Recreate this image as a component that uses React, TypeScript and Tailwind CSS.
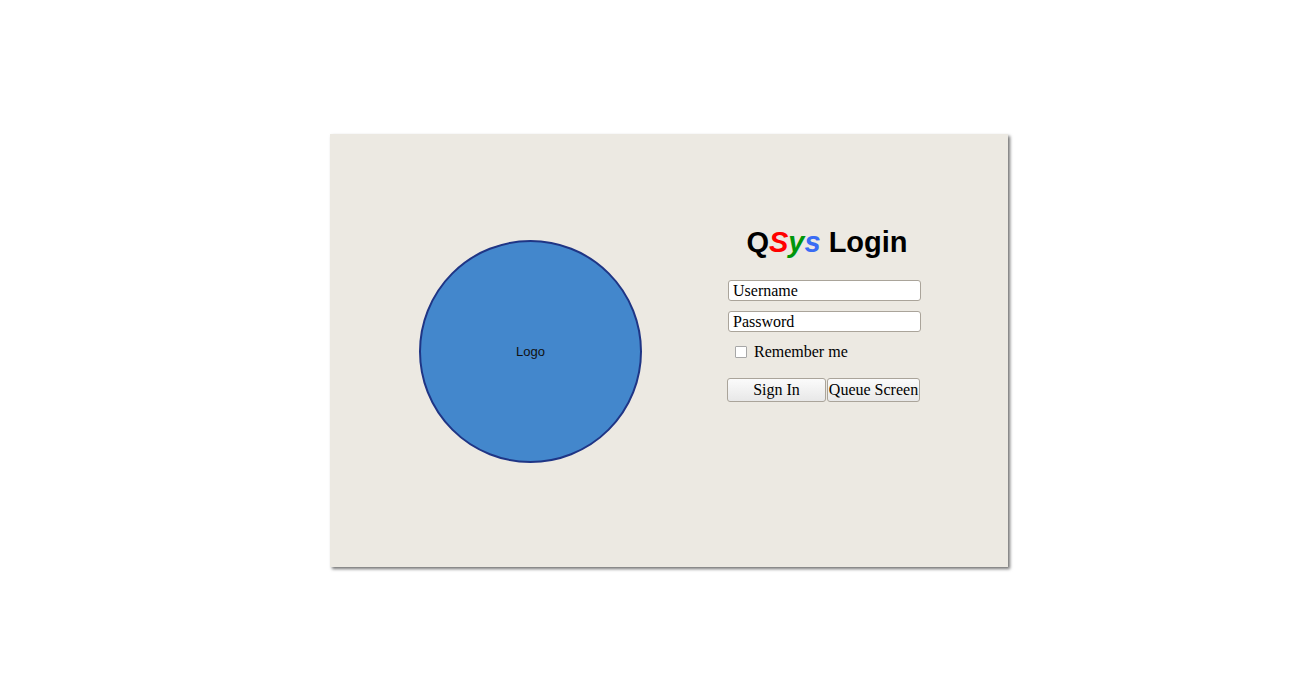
export default function App() {
  return (
    <div className="min-h-screen bg-white pt-[134px] pl-[330px] font-['Liberation_Serif',serif]">
      {/* login panel */}
      <div className="w-[678px] h-[433px] bg-[#ece9e2] shadow-[2px_2px_3px_rgba(0,0,0,0.55)] flex items-start">
        {/* logo placeholder */}
        <div className="ml-[89px] mt-[106px] w-[223px] h-[223px] rounded-full bg-[#4387cc] border-2 border-[#1f3585] flex items-center justify-center">
          <span className="font-['Liberation_Sans',Arial,sans-serif] text-[13px] text-[#111]">Logo</span>
        </div>

        {/* form */}
        <div className="ml-[85px] mt-[92px] w-[194px] flex flex-col">
          <h1 className="pl-[6px] text-center font-['Liberation_Sans',Arial,sans-serif] font-bold text-[29px] leading-[32px] text-black whitespace-nowrap">
            Q<i className="text-[#ff0000]">S</i>
            <i className="text-[#00960a]">y</i>
            <i className="text-[#3a6cf4]">s</i> Login
          </h1>

          <input
            className="mt-[22px] ml-px w-[193px] h-[21px] px-[4px] bg-white border border-[#aaa49a] rounded-[3px] text-[16px] text-black outline-none"
            defaultValue="Username"
          />
          <input
            className="mt-[10px] ml-px w-[193px] h-[21px] px-[4px] bg-white border border-[#aaa49a] rounded-[3px] text-[16px] text-black outline-none"
            defaultValue="Password"
          />

          <label className="mt-[10px] ml-[8px] flex items-center gap-[7px] text-[16px] leading-[20px] text-black">
            <span className="w-[12px] h-[12px] border border-[#a7a7a7] bg-white rounded-[1px]" />
            Remember me
          </label>

          <div className="mt-[16px] flex gap-px">
            <button className="w-[99px] h-[24px] border border-[#aaa49a] rounded-[3px] bg-gradient-to-b from-[#fbfbfb] to-[#e8e8e8] text-[16px] leading-[20px] text-black">
              Sign In
            </button>
            <button className="w-[93px] h-[24px] border border-[#aaa49a] rounded-[3px] bg-gradient-to-b from-[#fbfbfb] to-[#e8e8e8] text-[16px] leading-[20px] text-black whitespace-nowrap">
              Queue Screen
            </button>
          </div>
        </div>
      </div>
    </div>
  )
}
